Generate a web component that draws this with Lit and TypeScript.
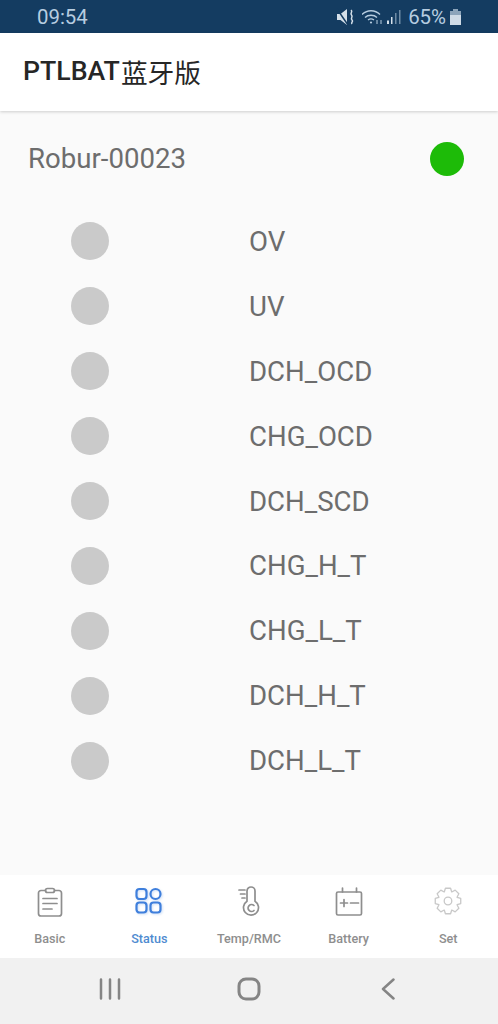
import { LitElement, html, css, svg } from 'lit';
import { customElement } from 'lit/decorators.js';

const FAULTS = ['OV', 'UV', 'DCH_OCD', 'CHG_OCD', 'DCH_SCD', 'CHG_H_T', 'CHG_L_T', 'DCH_H_T', 'DCH_L_T'];

// 8 tooth gear outline, centred on (16, 15)
function gearPath() {
  const pts: string[] = [];
  for (let i = 0; i < 8; i++) {
    const a = (i * Math.PI) / 4 - Math.PI / 2;
    const at = (r: number, off: number) =>
      `${(16 + r * Math.cos(a + off)).toFixed(2)} ${(15 + r * Math.sin(a + off)).toFixed(2)}`;
    pts.push(at(9.8, -0.39), at(13, -0.2), at(13, 0.2), at(9.8, 0.39));
  }
  return `M${pts.join('L')}Z`;
}

const basicIcon = svg`
  <path d="M11.500 4.500H7A2.500 2.500 0 0 0 4.500 7v20.500A2.500 2.500 0 0 0 7 30h18a2.500 2.500 0 0 0 2.500-2.500V7A2.500 2.500 0 0 0 25 4.500H20.500"/>
  <rect x="11.500" y="2.500" width="9" height="4" rx="2"/>
  <path d="M9 12.500h14M9 17.500h14M9 23h9"/>`;

const statusIcon = svg`
  <rect x="3.500" y="3" width="10" height="10" rx="3"/>
  <circle cx="22.500" cy="8" r="5"/>
  <rect x="3.500" y="16.500" width="10" height="10" rx="3"/>
  <rect x="17.500" y="16.500" width="10" height="10" rx="3"/>`;

const tempIcon = svg`
  <path d="M14 15.200V5a4 4 0 0 1 8 0v10.200a7.500 7.500 0 1 1-8 0z"/>
  <path d="M21 19.500a3.500 3.500 0 1 0 0 5"/>
  <path d="M6 4h6M7.500 8h4.500M9 12h3"/>`;

const batteryIcon = svg`
  <rect x="3.500" y="6" width="25" height="23" rx="1.500"/>
  <path d="M9.500 2v4M23.500 2v4M7.500 17h7M11 13.500v7M17.500 17h8"/>`;

const setIcon = svg`
  <path d=${gearPath()}/>
  <circle cx="16" cy="15" r="3.800"/>`;

const TABS = [
  { label: 'Basic', icon: basicIcon, kind: '' },
  { label: 'Status', icon: statusIcon, kind: 'active' },
  { label: 'Temp/RMC', icon: tempIcon, kind: '' },
  { label: 'Battery', icon: batteryIcon, kind: '' },
  { label: 'Set', icon: setIcon, kind: 'faint' },
];

@customElement('app-root')
export class AppRoot extends LitElement {
  static styles = css`
    :host {
      display: flex;
      flex-direction: column;
      height: 1024px;
      background: #fafafa;
      font-family: Roboto, 'Noto Sans CJK SC', sans-serif;
    }

    /* Status bar */
    .status-bar {
      height: 33px;
      box-sizing: border-box;
      background: #143c61;
      color: #b7cde0;
      display: flex;
      align-items: center;
      padding: 0 36px 0 37px;
      font-size: 20.400px;
      flex: none;
    }
    .status-time { flex: 1; }
    .status-icons {
      display: flex;
      align-items: center;
      gap: 3px;
    }
    .status-icons svg { display: block; }
    .mute { margin-right: 4px; }
    .level { margin-left: 4px; }

    /* Title */
    .app-bar {
      height: 78px;
      box-sizing: border-box;
      background: #fff;
      display: flex;
      align-items: center;
      padding: 0 0 2px 23px;
      font-size: 26.700px;
      font-weight: 500;
      color: #262626;
      box-shadow: 0 1px 3px rgba(0, 0, 0, 0.18);
      flex: none;
    }
    .cjk { font-weight: 400; margin-left: 1px; }

    /* Content */
    .content { flex: 1; }
    .device {
      display: flex;
      align-items: center;
      justify-content: space-between;
      padding: 30px 34px 0 28px;
      height: 36px;
      font-size: 27.600px;
      color: #6d6d6d;
    }
    .device-name { margin-top: -2px; }
    .online {
      width: 34px;
      height: 34px;
      border-radius: 50%;
      background: #1dbb08;
    }
    .faults {
      margin-top: 32px;
      display: flex;
      flex-direction: column;
    }
    .fault {
      height: 64.900px;
      display: flex;
      align-items: center;
      padding-left: 71px;
      font-size: 27.600px;
      color: #6d6d6d;
    }
    .led {
      width: 38px;
      height: 38px;
      border-radius: 50%;
      background: #cacaca;
      margin-right: 140px;
    }

    /* Tabs */
    .tabs {
      height: 83px;
      background: #fff;
      display: grid;
      grid-template-columns: repeat(5, 1fr);
      flex: none;
    }
    .tab {
      display: flex;
      flex-direction: column;
      align-items: center;
      padding-top: 11px;
      font-size: 12.600px;
      font-weight: 500;
      color: #8e8e8e;
    }
    .tab svg {
      width: 32px;
      height: 32px;
      fill: none;
      stroke: #8e8e8e;
      stroke-width: 1.700;
      stroke-linecap: round;
      stroke-linejoin: round;
      margin-bottom: 13px;
    }
    .tab.active { color: #4f8bd0; }
    .tab.active svg {
      stroke: #3f7fdc;
      stroke-width: 2.200;
      filter: drop-shadow(1px 1px 1px rgba(63, 127, 220, 0.25));
    }
    .tab.faint svg { stroke: #c8c8c8; stroke-width: 1.300; }

    /* Android nav */
    .nav {
      height: 66px;
      background: #f1f1f1;
      display: grid;
      grid-template-columns: 1fr 1fr 1fr;
      align-items: center;
      justify-items: center;
      flex: none;
      padding: 0 40px 4px;
      box-sizing: border-box;
    }
    .nav svg {
      fill: none;
      stroke: #858585;
      stroke-width: 2.500;
      stroke-linecap: round;
      stroke-linejoin: round;
      display: block;
    }
    .nav .home { stroke-width: 3; }
  `;

  render() {
    return html`
      <div class="status-bar">
        <span class="status-time">09:54</span>
        <div class="status-icons">
          <svg class="mute" width="18" height="18" viewBox="0 0 18 18" fill="#d5e0ea">
            <path d="M0 6h3.500L10 1v16l-6.500-5H0z"/>
            <path d="M0 1l11 16" stroke="#143c61" stroke-width="1.500"/>
            <path d="M14 2c2.500 2-1.500 3 .5 5s-1.500 3 .5 5-1.500 2 0 4" fill="none" stroke="#d5e0ea" stroke-width="1.500"/>
          </svg>
          <svg width="22" height="18" viewBox="0 0 22 18" fill="none" stroke="#b7cde0" stroke-width="1.300">
            <path d="M0 6.500c5-5 13-5 18 0M3 9.500c3-3 9-3 12 0M6 12c2-1.500 4-1.500 6 0"/>
            <circle cx="9" cy="14.500" r="1.100" fill="#b7cde0" stroke="none"/>
            <path d="M15 12v4M19 16v-4" stroke-width="1"/>
          </svg>
          <svg width="14" height="18" viewBox="0 0 14 18">
            <rect x="0" y="12.500" width="2" height="3.500" fill="#d5e0ea"/>
            <rect x="4" y="9" width="1.500" height="7" fill="#d5e0ea"/>
            <rect x="8" y="5" width="1.500" height="11" fill="#6f8ba5"/>
            <rect x="12" y="2" width="1.500" height="14" fill="#6f8ba5"/>
          </svg>
          <span class="level">65%</span>
          <svg width="13" height="18" viewBox="0 0 13 18">
            <rect x="4" y="1" width="5" height="2" fill="#8ca4ba"/>
            <rect x="1" y="3" width="11" height="4" fill="#8ca4ba"/>
            <rect x="1" y="7" width="11" height="10" fill="#cfdbe6"/>
          </svg>
        </div>
      </div>

      <div class="app-bar">PTLBAT<span class="cjk">蓝牙版</span></div>

      <div class="content">
        <div class="device">
          <span class="device-name">Robur-00023</span>
          <span class="online"></span>
        </div>
        <div class="faults">
          ${FAULTS.map(
            (name) => html`
              <div class="fault">
                <span class="led"></span>
                <span>${name}</span>
              </div>
            `
          )}
        </div>
      </div>

      <div class="tabs">
        ${TABS.map(
          (tab) => html`
            <div class="tab ${tab.kind}">
              <svg viewBox="0 0 32 32">${tab.icon}</svg>
              <span>${tab.label}</span>
            </div>
          `
        )}
      </div>

      <div class="nav">
        <svg width="22" height="22" viewBox="0 0 22 22"><path d="M2 1.500v19M11 1.500v19M20 1.500v19"/></svg>
        <svg class="home" width="24" height="24" viewBox="0 0 24 24"><rect x="2" y="2" width="20" height="20" rx="7"/></svg>
        <svg width="14" height="22" viewBox="0 0 14 22"><path d="M12.500 1.500L2 11l10.500 9.500"/></svg>
      </div>
    `;
  }
}
